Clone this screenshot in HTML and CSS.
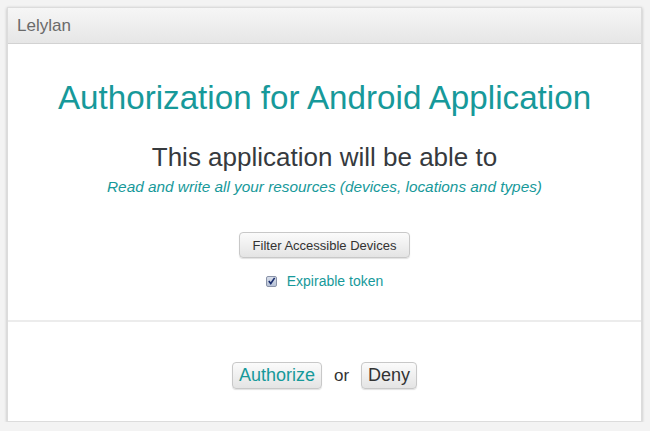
FILE: index.html
```html
<!DOCTYPE html>
<html>
<head>
<meta charset="utf-8">
<link rel="stylesheet" href="styles.css">
</head>
<body>
<div class="card">
  <div class="header">Lelylan</div>
  <div class="main">
    <h1 class="title">Authorization for Android Application</h1>
    <h2 class="subtitle">This application will be able to</h2>
    <p class="scope">Read and write all your resources (devices, locations and types)</p>
    <button class="btn btn-small">Filter Accessible Devices</button>
    <label class="check">
      <span class="box"><svg width="10" height="10" viewBox="0 0 10 10"><path d="M2 5 L4.2 7.8 L8.5 1.5" fill="none" stroke="#1c2f6e" stroke-width="1.8"/></svg></span>
      <span>Expirable token</span>
    </label>
  </div>
  <div class="actions">
    <button class="btn btn-large teal">Authorize</button>
    <span class="or">or</span>
    <button class="btn btn-large">Deny</button>
  </div>
</div>
</body>
</html>
```

FILE: styles.css
```css
html, body {
  margin: 0;
  padding: 0;
}
body {
  background: #f3f3f3;
  font-family: "Liberation Sans", Arial, sans-serif;
  padding: 7px 8px 0 7px;
}
.card {
  width: 635px;
  height: 415px;
  background: #fff;
  border: 1px solid #dcdcdc;
  box-sizing: border-box;
  box-shadow: 0 1px 3px rgba(0,0,0,0.25);
  display: flex;
  flex-direction: column;
}
.header {
  height: 36px;
  box-sizing: border-box;
  background: linear-gradient(#f6f6f6, #e6e6e6);
  border-bottom: 1px solid #d2d2d2;
  color: #6a6a6a;
  font-size: 17px;
  line-height: 35px;
  padding-left: 9px;
}
.main {
  display: flex;
  flex-direction: column;
  align-items: center;
  border-bottom: 2px solid #ececec;
  height: 276px;
}
.title {
  margin: 34px 0 0;
  font-size: 33.2px;
  font-weight: normal;
  color: #17999a;
  line-height: 40px;
}
.subtitle {
  margin: 24px 0 0;
  font-size: 26px;
  font-weight: normal;
  color: #363a3e;
  line-height: 30px;
}
.scope {
  margin: 6px 0 0;
  font-size: 15.35px;
  font-style: italic;
  color: #17999a;
  line-height: 18px;
}
.btn {
  font-family: "Liberation Sans", Arial, sans-serif;
  background: linear-gradient(#fbfbfb, #e4e4e4);
  border: 1px solid #c8c8c8;
  border-radius: 4px;
  box-shadow: 0 1px 1px rgba(0,0,0,0.12);
  color: #333;
  padding: 0;
}
.btn-small {
  margin-top: 36px;
  width: 171px;
  height: 26px;
  font-size: 13px;
}
.check {
  margin-top: 15px;
  display: flex;
  align-items: center;
  gap: 10px;
  font-size: 14px;
  line-height: 16px;
  color: #17999a;
}
.box {
  width: 9px;
  height: 9px;
  border: 1px solid #8a93a8;
  border-radius: 2px;
  background: linear-gradient(#d8deea, #b7c2d6);
  display: flex;
  align-items: center;
  justify-content: center;
}
.actions {
  display: flex;
  justify-content: center;
  align-items: center;
  padding-top: 40px;
}
.btn-large {
  height: 27px;
  font-size: 18px;
  padding: 0 6px;
}
.teal {
  color: #17999a;
}
.or {
  font-size: 17px;
  color: #333;
  margin: 0 12px;
}
```
